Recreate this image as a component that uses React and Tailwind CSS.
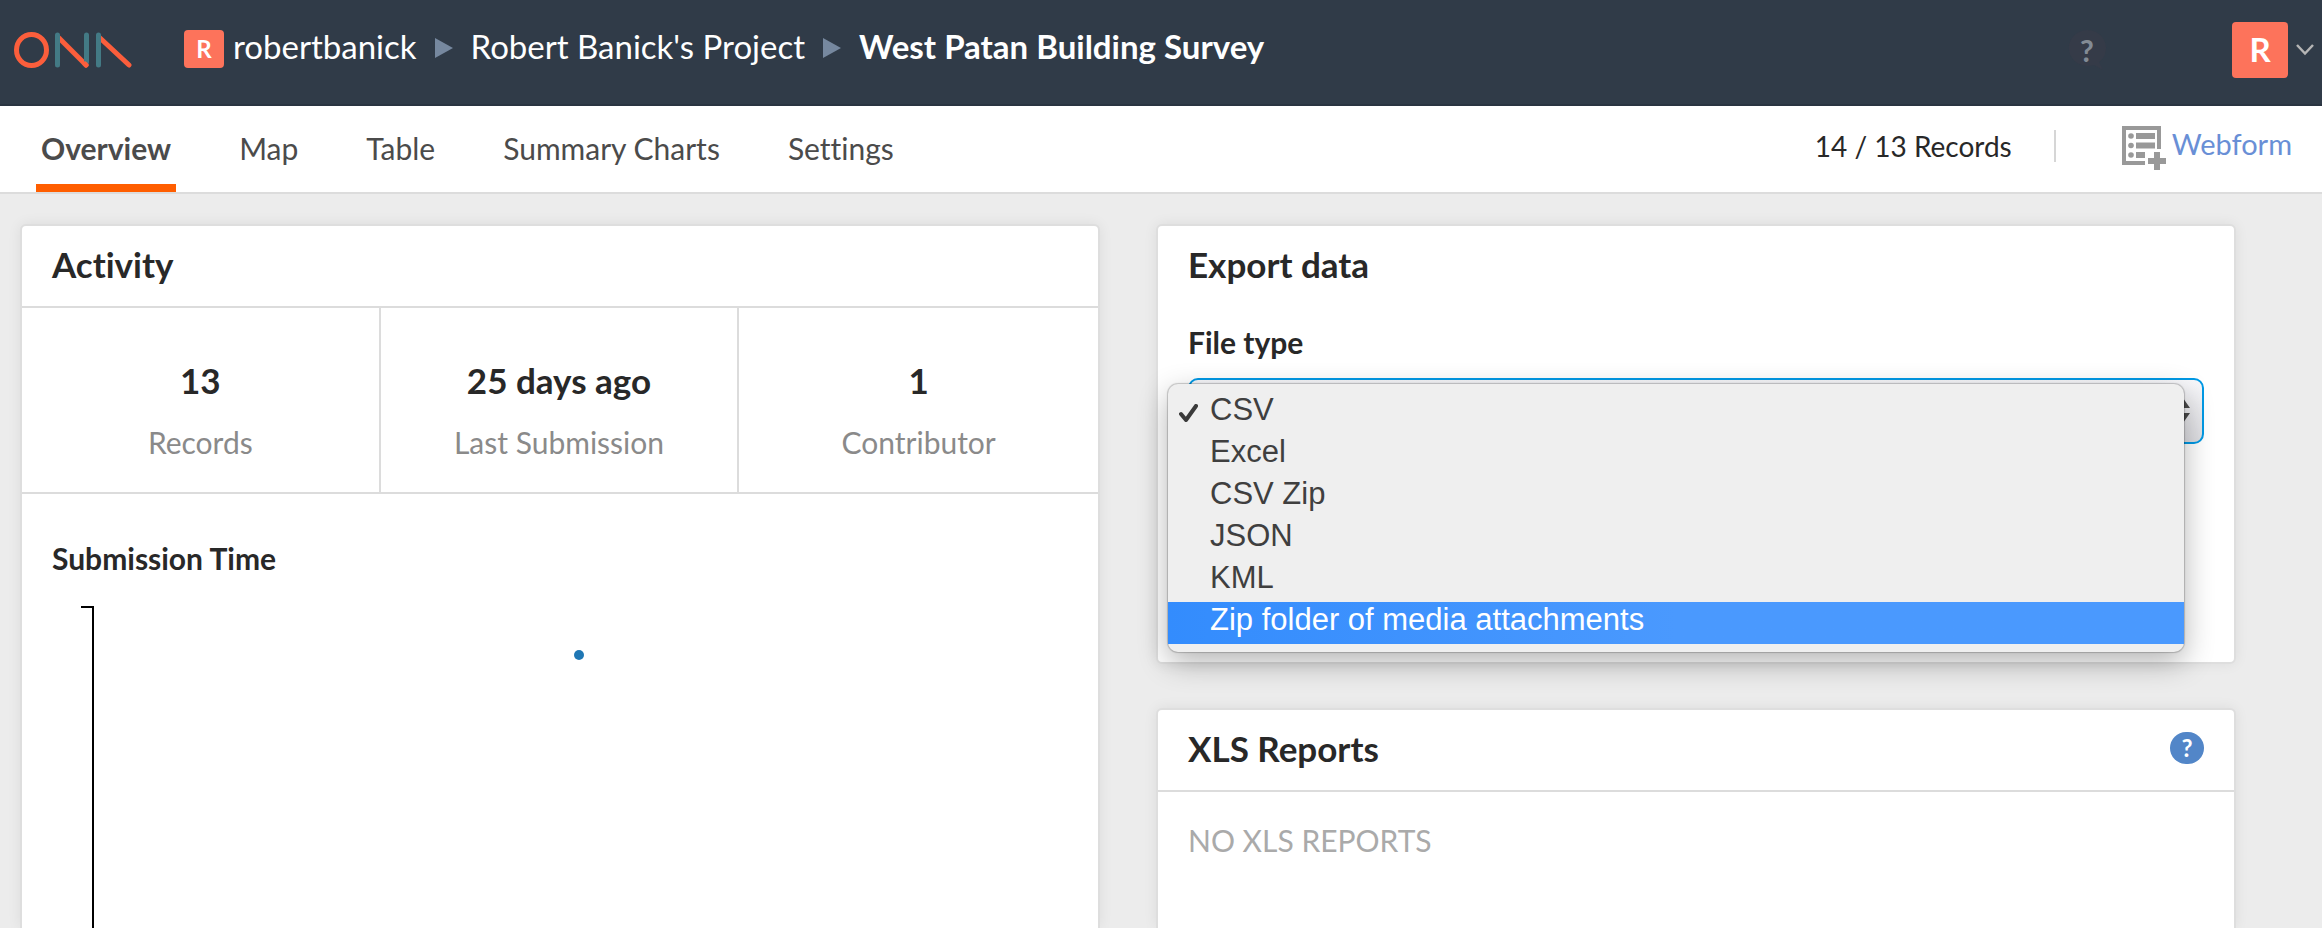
import React, { useState } from "react";

const fileTypes = ["CSV", "Excel", "CSV Zip", "JSON", "KML", "Zip folder of media attachments"];
const tabs = ["Overview", "Map", "Table", "Summary Charts", "Settings"];
const stats = [
  { value: "13", label: "Records" },
  { value: "25 days ago", label: "Last Submission" },
  { value: "1", label: "Contributor" },
];

function Logo() {
  return (
    <svg className="block h-9 w-[118px]" viewBox="0 0 118 36" fill="none" role="img" aria-label="Ona">
      <ellipse cx="17.5" cy="18" rx="15" ry="15.5" stroke="#fb5e3c" strokeWidth="5" />
      <g strokeWidth="5" strokeLinecap="round">
        <path d="M45 6L72 33" stroke="#fb5e3c" />
        <path d="M86 6L115 33" stroke="#fb5e3c" />
        <path d="M43.500 3V33M72.500 3V30M84.500 3V33" stroke="#437a85" />
        <path d="M71 32L72 33" stroke="#fb5e3c" />
      </g>
    </svg>
  );
}

function Separator() {
  return (
    <svg className="mx-[18px] mt-1 block h-5 w-[18px]" viewBox="0 0 18 20" aria-hidden="true">
      <path d="M0 0L18 10L0 20Z" fill="#76889f" />
    </svg>
  );
}

function WebformIcon() {
  return (
    <svg className="block h-11 w-11" viewBox="0 0 44 44" fill="#999" aria-hidden="true">
      <path d="M0 0H39V23H35V4H4V35H23V39H0Z" />
      <circle cx="9" cy="10" r="2.800" />
      <circle cx="9" cy="19.500" r="2.800" />
      <circle cx="9" cy="29" r="2.800" />
      <rect x="14" y="7" width="19" height="6" />
      <rect x="14" y="16.500" width="19" height="6" />
      <rect x="14" y="26" width="9" height="6" />
      <path d="M32 26H38V32H44V38H38V44H32V38H26V32H32Z" />
    </svg>
  );
}

function Header() {
  return (
    <header className="flex h-[106px] shrink-0 items-start border-b-2 border-[#2a3441] bg-[#303b48] pl-3.5 pr-2 text-white">
      <a href="#home" className="mt-8">
        <Logo />
      </a>
      <nav aria-label="Breadcrumb" className="ml-[52px] mt-6 flex h-11 items-center text-[33px] leading-[44px]">
        <a href="#user" className="flex items-center gap-[9px]">
          <span className="mt-1.5 flex h-[38px] w-10 items-center justify-center rounded bg-[#fd735b] text-2xl font-bold">R</span>
          robertbanick
        </a>
        <Separator />
        <a href="#project">Robert Banick's Project</a>
        <Separator />
        <span className="font-bold">West Patan Building Survey</span>
      </nav>
      <div className="ml-auto mt-[22px] flex h-14 items-center">
        <button type="button" aria-label="Help" className="relative mr-[125px] flex h-10 w-10 items-center justify-center">
          <svg className="absolute left-0 top-0 h-10 w-10" viewBox="0 0 40 40" aria-hidden="true">
            <path d="M20 0A19 18 0 1 0 27 35L36 40L32 32A19 18 0 0 0 20 0Z" fill="#353b48" />
          </svg>
          <span className="relative text-[30px] font-bold leading-9 text-[#838b95]">?</span>
        </button>
        <button type="button" aria-label="Account" className="flex items-center gap-2">
          <span className="flex h-14 w-14 items-center justify-center rounded bg-[#fd735b] text-[33px] font-bold">R</span>
          <svg className="block h-3 w-[18px]" viewBox="0 0 18 12" fill="none" aria-hidden="true">
            <path d="M1 1L9 9.500L17 1" stroke="#b5b5b5" strokeWidth="2.500" />
          </svg>
        </button>
      </div>
    </header>
  );
}

function TabBar() {
  return (
    <div className="flex h-[88px] shrink-0 items-stretch justify-between border-b-2 border-[#dcdcdc] bg-white pl-9 pr-[30px] text-[30px]">
      <nav aria-label="Sections" className="flex gap-[58px]">
        {tabs.map((tab, i) => (
          <a
            key={tab}
            href={"#" + tab.toLowerCase().replace(" ", "-")}
            className={
              i === 0
                ? "flex border-b-8 border-[#ff5e00] px-[5px] pt-6 font-bold leading-9 text-[#4b4b4b]"
                : "flex px-[5px] pt-6 leading-9 text-[#4b4b4b]"
            }
          >
            {tab}
          </a>
        ))}
      </nav>
      <div className="flex pt-5 leading-10">
        <span className="text-[28px] text-[#282828]">14 / 13 Records</span>
        <span className="ml-[42px] mt-1 h-8 w-0.5 bg-[#d6d6d6]" />
        <a href="#webform" className="ml-[66px] flex gap-[6px] text-[#698fd6]">
          <WebformIcon />
          <span className="-mt-0.5 text-[29px]">Webform</span>
        </a>
      </div>
    </div>
  );
}

function Card({ className, children }) {
  return (
    <section className={"rounded-md border-2 border-[#dedede] bg-white shadow-[0_0_14px_rgba(0,0,0,0.07)] " + className}>
      {children}
    </section>
  );
}

function Activity() {
  return (
    <Card className="flex min-h-0 flex-col rounded-b-none border-b-0">
      <h2 className="h-[82px] border-b-2 border-[#dcdcdc] px-[30px] pt-[18px] text-[35px] font-bold leading-[40px]">Activity</h2>
      <dl className="grid h-[186px] grid-cols-3 border-b-2 border-[#dcdcdc] text-center">
        {stats.map((s, i) => (
          <div
            key={s.label}
            className={i < 2 ? "flex flex-col-reverse justify-end gap-[22px] border-r-2 border-[#dcdcdc] pt-[52px]" : "flex flex-col-reverse justify-end gap-[22px] pt-[52px]"}
          >
            <dt className="text-[30px] leading-10 text-[#8a8a8a]">{s.label}</dt>
            <dd className="text-[35px] font-bold leading-[40px]">{s.value}</dd>
          </div>
        ))}
      </dl>
      <h3 className="px-[30px] pt-[44px] text-[30px] font-bold leading-10">Submission Time</h3>
      <svg className="ml-[59px] mt-7 block min-h-0 w-auto flex-1" role="img" aria-label="Submissions over time">
        <path d="M0 1H13" stroke="#000" strokeWidth="2" />
        <line x1="12" y1="0" x2="12" y2="100%" stroke="#000" strokeWidth="2" />
        <circle cx="498" cy="49" r="5" fill="#1f77b4" />
      </svg>
    </Card>
  );
}

function ExportData() {
  const [selected, setSelected] = useState("CSV");
  return (
    <Card className="h-[440px] px-[30px] pt-[18px]">
      <h2 className="text-[35px] font-bold leading-10">Export data</h2>
      <label htmlFor="file-type" className="mt-[38px] block text-[30px] font-bold leading-10">
        File type
      </label>
      <div className="relative mt-4">
        <select
          id="file-type"
          value={selected}
          onChange={(e) => setSelected(e.target.value)}
          className="block h-[66px] w-full appearance-none rounded-[10px] border-2 border-[#0099e5] bg-gradient-to-b from-[#f8f8fb] to-[#dedee2] px-5 text-[30px] outline-none"
        >
          {fileTypes.map((t) => (
            <option key={t}>{t}</option>
          ))}
        </select>
        <svg className="pointer-events-none absolute right-3.5 top-5 h-[25px] w-3.5" viewBox="0 0 14 25" fill="#4a4a4a" aria-hidden="true">
          <path d="M7 0L14 10H0ZM7 25L14 15H0Z" />
        </svg>
        <ul
          role="listbox"
          aria-label="File type options"
          className="absolute -left-5 right-5 top-[6px] z-10 rounded-[10px] bg-[#efefef] py-2 font-['Liberation_Sans',Arial,sans-serif] text-[31px] leading-9 text-[#3f3f3f] shadow-[0_0_1px_1px_rgba(0,0,0,0.2),0_10px_30px_rgba(0,0,0,0.3)]"
        >
          {fileTypes.map((t, i) => (
            <li
              key={t}
              role="option"
              aria-selected={t === selected}
              onClick={() => setSelected(t)}
              className={
                i === fileTypes.length - 1
                  ? "flex h-[42px] bg-gradient-to-r from-[#338cfd] to-[#4a99fe] to-50% pl-[11px] text-white"
                  : "flex h-[42px] pl-[11px]"
              }
            >
              <span className="w-[31px] pt-3">
                {t === selected && (
                  <svg className="block h-[18px] w-[19px]" viewBox="0 0 19 18" fill="none" aria-hidden="true">
                    <path d="M2 10L7 16L17 2" stroke="#3a3a3a" strokeWidth="4" strokeLinecap="round" strokeLinejoin="round" />
                  </svg>
                )}
              </span>
              {t}
            </li>
          ))}
        </ul>
      </div>
    </Card>
  );
}

function XlsReports() {
  return (
    <Card className="min-h-0 flex-1 rounded-b-none border-b-0">
      <div className="flex h-[82px] items-start justify-between border-b-2 border-[#dcdcdc] pl-[30px] pr-[30px]">
        <h2 className="pt-[18px] text-[35px] font-bold leading-10">XLS Reports</h2>
        <button
          type="button"
          aria-label="About XLS reports"
          className="mt-[22px] flex h-8 w-[34px] items-center justify-center rounded-full bg-[#5286c8] text-2xl font-bold leading-8 text-white"
        >
          ?
        </button>
      </div>
      <p className="px-[30px] pt-7 text-[30px] leading-10 text-[#aaa]">NO XLS REPORTS</p>
    </Card>
  );
}

export default function App() {
  return (
    <div className="flex h-screen flex-col overflow-hidden bg-[#ececec] font-['Lato','Open_Sans',sans-serif] text-[#282828] [font-variant-ligatures:none]">
      <Header />
      <TabBar />
      <main className="grid min-h-0 flex-1 grid-cols-2 gap-14 pl-5 pr-[86px] pt-[30px]">
        <Activity />
        <div className="flex min-h-0 flex-col gap-11">
          <ExportData />
          <XlsReports />
        </div>
      </main>
    </div>
  );
}
